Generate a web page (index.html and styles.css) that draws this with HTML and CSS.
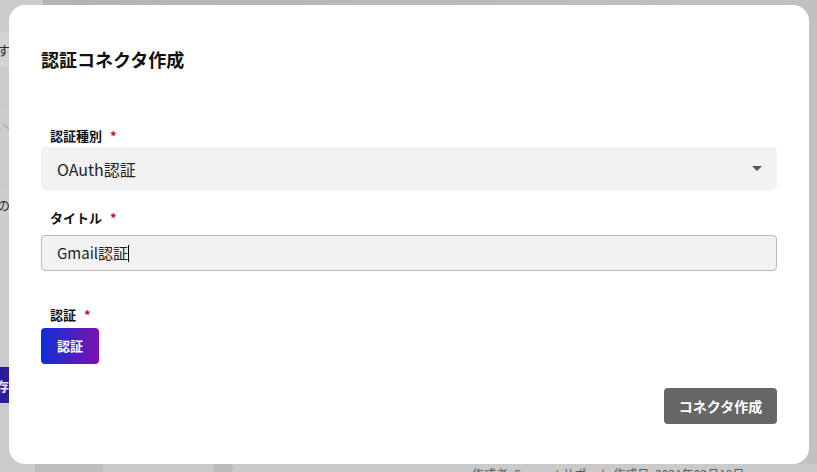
FILE: index.html
```html
<!DOCTYPE html>
<html lang="ja">
<head>
<meta charset="utf-8">
<title>認証コネクタ作成</title>
<link rel="stylesheet" href="styles.css">
</head>
<body>
<div class="page">
  <aside class="side">
    <div class="side-gap1"></div>
    <div class="side-row side-row-1"><span class="side-text">す</span></div>
    <div class="side-gap2"></div>
    <div class="side-row side-row-2">
      <svg class="chev" width="10" height="10" viewBox="0 0 10 10"><path d="M2 2 L8 7" stroke="#a8a8a8" stroke-width="1.2" fill="none"/></svg>
    </div>
    <div class="side-gap3"></div>
    <div class="side-row side-row-3"><span class="side-text">の</span></div>
    <div class="side-gap4"></div>
    <div class="side-btn"><span class="side-btn-text">存</span></div>
  </aside>
  <main class="main">
    <div class="main-top"></div>
    <div class="main-body"></div>
    <div class="main-foot">
      <div class="foot-block"></div>
      <div class="foot-circle"></div>
      <div class="foot-text">作成者: Support サポート 作成日: 2021年02月18日</div>
    </div>
  </main>
</div>

<div class="overlay">
  <div class="modal">
    <h1 class="modal-title">認証コネクタ作成</h1>

    <div class="field field-type">
      <label class="label">認証種別<span class="req">*</span></label>
      <div class="select">
        <span class="select-value">OAuth認証</span>
        <svg class="caret" width="10" height="5" viewBox="0 0 10 5"><path d="M0 0 H10 L5 5 Z" fill="#555"/></svg>
      </div>
    </div>

    <div class="field field-title">
      <label class="label">タイトル<span class="req">*</span></label>
      <div class="input"><span class="input-value">Gmail認証</span><span class="text-caret"></span></div>
    </div>

    <div class="field field-auth">
      <label class="label">認証<span class="req">*</span></label>
      <div><button class="btn-auth">認証</button></div>
    </div>

    <div class="actions">
      <button class="btn-create">コネクタ作成</button>
    </div>
  </div>
</div>
</body>
</html>
```

FILE: styles.css
```css
* { box-sizing: border-box; }

html, body {
  margin: 0;
  padding: 0;
  width: 817px;
  height: 472px;
  overflow: hidden;
}

body {
  font-family: "Noto Sans CJK JP", "Noto Sans", sans-serif;
  background: #c3c3c3;
  color: #111;
}

/* underlying (dimmed) page */
.page {
  display: grid;
  grid-template-columns: 43px 1fr;
  height: 472px;
}

.side {
  background: #cbcbcb;
  display: flex;
  flex-direction: column;
  overflow: hidden;
}

.side-gap1 { height: 32px; }
.side-gap2 { height: 41px; }
.side-gap3 { height: 43px; }
.side-gap4 { height: 64px; }

.side-row {
  background: #d3d3d3;
  display: flex;
  align-items: center;
}
.side-row-1 { height: 35px; }
.side-row-2 { height: 37px; background: #cdcdcd; }
.side-row-3 { height: 115px; align-items: flex-start; padding-top: 8px; background: #cdcdcd; }

.side-text {
  font-size: 13px;
  line-height: 18px;
  color: #2a2a2a;
  margin-left: -3px;
}

.chev { margin-left: 1px; }

.side-btn {
  height: 36px;
  background: linear-gradient(90deg, #2a1c9c, #4a18a4);
  display: flex;
  align-items: center;
}
.side-btn-text {
  color: #e8e8f4;
  font-weight: 700;
  font-size: 13px;
  margin-left: -4px;
}

.main {
  display: flex;
  flex-direction: column;
  background: #c1c1c1;
}
.main-top {
  height: 5px;
  background: linear-gradient(90deg, #b3b3b3, #c2c2c2);
}
.main-body { flex: 1; }
.main-foot {
  height: 16px;
  margin-bottom: -8px;
  background: #cacaca;
  display: flex;
  align-items: flex-start;
}
.foot-block {
  width: 68px;
  height: 16px;
  background: #bdbdbd;
  margin-left: -8px;
}
.foot-circle {
  width: 20px;
  height: 20px;
  border-radius: 50%;
  background: #bcbcbc;
  margin-left: 110px;
  margin-top: -6px;
}
.foot-text {
  margin-left: 239px;
  margin-top: 3px;
  font-size: 12px;
  line-height: 14px;
  color: #5a5a5a;
  white-space: nowrap;
}

/* modal */
.overlay {
  position: fixed;
  inset: 0;
  padding: 5px 8px 8px 9px;
}

.modal {
  width: 800px;
  height: 459px;
  background: #fff;
  border-radius: 16px;
  padding: 41px 32px 0 32px;
  display: flex;
  flex-direction: column;
}

.modal-title {
  margin: 0;
  font-size: 18px;
  line-height: 26px;
  font-weight: 700;
  color: #111;
}

.field {
  display: flex;
  flex-direction: column;
}
.field-type { margin-top: 55px; }
.field-title { margin-top: 19px; }
.field-auth { margin-top: 35px; }

.label {
  display: block;
  padding-left: 9px;
  font-size: 13px;
  line-height: 17px;
  font-weight: 700;
  color: #111;
}
.field-type .label { margin-bottom: 3px; }
.field-title .label { margin-bottom: 9px; }
.field-auth .label { margin-bottom: 5px; }

.req {
  color: #c8101c;
  margin-left: 8px;
  font-size: 13px;
}

.select {
  height: 43px;
  background: #f2f2f2;
  border-radius: 5px;
  display: flex;
  align-items: center;
  justify-content: space-between;
  padding: 0 15px 0 16px;
}
.select-value {
  font-size: 16px;
  line-height: 20px;
  color: #222;
}

.input {
  height: 36px;
  background: #f2f2f2;
  border: 1px solid #b8b8b8;
  border-radius: 4px;
  display: flex;
  align-items: center;
  padding-left: 15px;
}
.input-value {
  font-size: 15px;
  line-height: 20px;
  color: #222;
}
.text-caret {
  width: 1px;
  height: 17px;
  background: #000;
}

.btn-auth {
  height: 36px;
  padding: 0 16px;
  border: 0;
  border-radius: 4px;
  background: linear-gradient(90deg, #0f2fd3, #7b12b0);
  color: #fff;
  font-family: inherit;
  font-size: 13px;
  font-weight: 700;
  line-height: 18px;
}

.actions {
  display: flex;
  justify-content: flex-end;
  margin-top: 24px;
}

.btn-create {
  width: 113px;
  height: 36px;
  border: 0;
  border-radius: 4px;
  background: #666;
  color: #fff;
  font-family: inherit;
  font-size: 14px;
  font-weight: 700;
  line-height: 18px;
  padding: 0;
}
```
